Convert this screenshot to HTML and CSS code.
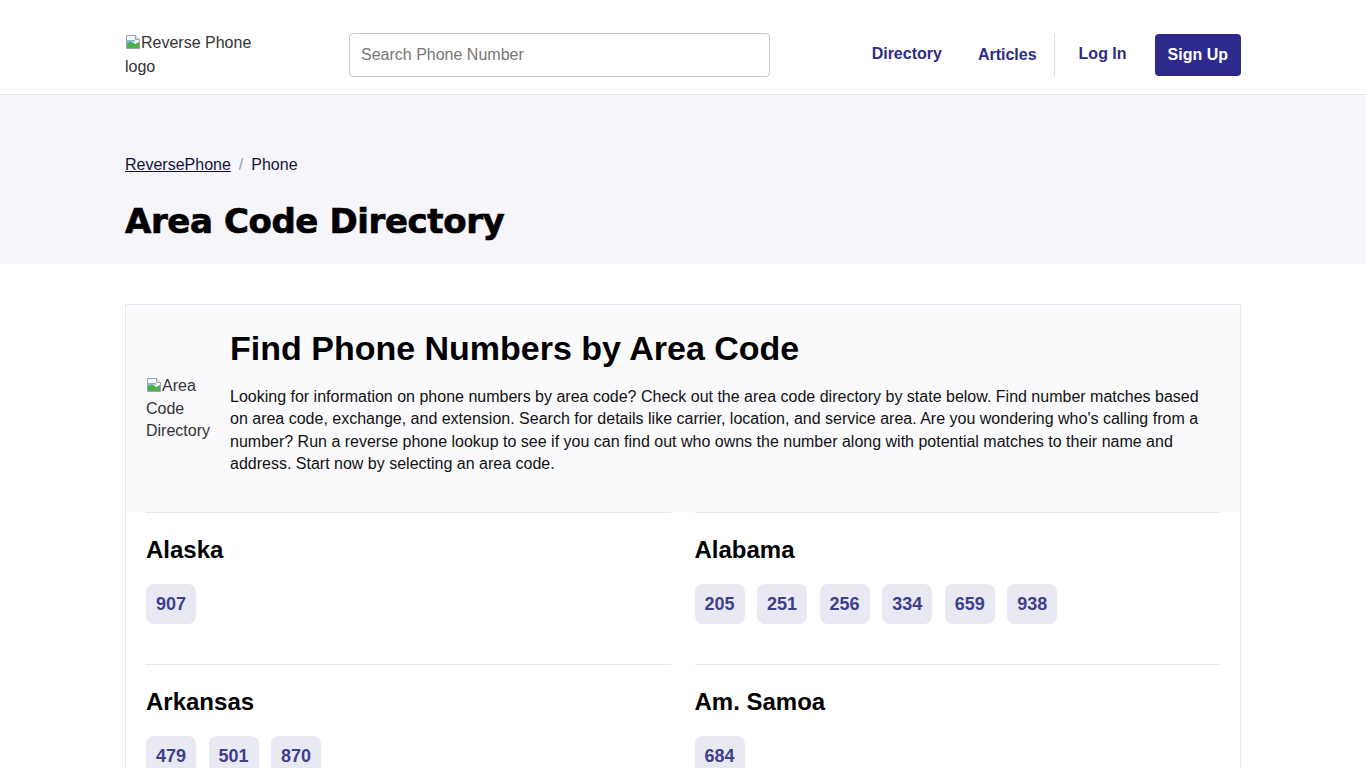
FILE: index.html
```html
<!DOCTYPE html>
<html lang="en">
<head>
<meta charset="utf-8">
<title>Area Code Directory</title>
<link rel="stylesheet" href="styles.css">
</head>
<body>
<header class="site-header">
  <div class="container header-inner">
    <div class="logo">
      <span class="alt"><svg class="broken" viewBox="0 0 16 16" width="16" height="16"><path d="M1.5 1.5h9l4 4v9h-13z" fill="#f4f6f8" stroke="#9aa3ad"/><path d="M10.5 1.5v4h4" fill="#e6e9ec" stroke="#9aa3ad"/><path d="M2 14V9l4-2 4 3 4-2v6z" fill="#4caf50"/><path d="M2 9V6h8v2l-4-1z" fill="#7fb3e6"/></svg>Reverse Phone logo</span>
    </div>
    <div class="search">
      <input type="text" placeholder="Search Phone Number">
    </div>
    <nav class="nav">
      <a class="nav-link" href="#">Directory</a>
      <a class="nav-link" href="#">Articles</a>
      <span class="divider"></span>
      <a class="nav-link login" href="#">Log In</a>
      <a class="btn" href="#">Sign Up</a>
    </nav>
  </div>
</header>

<section class="hero">
  <div class="container">
    <div class="breadcrumb"><a href="#">ReversePhone</a><span class="sep">/</span><span>Phone</span></div>
    <h1 class="title">Area Code Directory</h1>
  </div>
</section>

<main class="container">
  <div class="card">
    <div class="intro">
      <div class="intro-img"><svg class="broken" viewBox="0 0 16 16" width="16" height="16"><path d="M1.5 1.5h9l4 4v9h-13z" fill="#f4f6f8" stroke="#9aa3ad"/><path d="M10.5 1.5v4h4" fill="#e6e9ec" stroke="#9aa3ad"/><path d="M2 14V9l4-2 4 3 4-2v6z" fill="#4caf50"/><path d="M2 9V6h8v2l-4-1z" fill="#7fb3e6"/></svg>Area Code Directory</div>
      <div class="intro-text">
        <h2>Find Phone Numbers by Area Code</h2>
        <p>Looking for information on phone numbers by area code? Check out the area code directory by state below. Find number matches based on area code, exchange, and extension. Search for details like carrier, location, and service area. Are you wondering who's calling from a number? Run a reverse phone lookup to see if you can find out who owns the number along with potential matches to their name and address. Start now by selecting an area code.</p>
      </div>
    </div>
    <div class="states">
      <div class="state">
        <h3>Alaska</h3>
        <div class="chips"><a class="chip" href="#">907</a></div>
      </div>
      <div class="state">
        <h3>Alabama</h3>
        <div class="chips"><a class="chip" href="#">205</a><a class="chip" href="#">251</a><a class="chip" href="#">256</a><a class="chip" href="#">334</a><a class="chip" href="#">659</a><a class="chip" href="#">938</a></div>
      </div>
      <div class="state">
        <h3>Arkansas</h3>
        <div class="chips"><a class="chip" href="#">479</a><a class="chip" href="#">501</a><a class="chip" href="#">870</a></div>
      </div>
      <div class="state">
        <h3>Am. Samoa</h3>
        <div class="chips"><a class="chip" href="#">684</a></div>
      </div>
    </div>
  </div>
</main>
</body>
</html>
```

FILE: styles.css
```css
* { box-sizing: border-box; }
html, body { margin: 0; padding: 0; }
body {
  font-family: "Liberation Sans", Arial, sans-serif;
  font-size: 16px;
  color: #111;
  background: #fff;
}
a { text-decoration: none; color: inherit; }
.container { width: 1116px; margin: 0 auto; }

.site-header { border-bottom: 1px solid #e6e6ec; background: #fff; }
.header-inner { display: flex; align-items: center; height: 94px; padding-top: 16px; }
.logo { width: 140px; color: #333; line-height: 24px; margin-top: -1px; }
.broken { vertical-align: -2px; }
.search { margin-left: 84px; width: 421px; }
.search input {
  display: block;
  width: 100%; height: 44px; border: 1px solid #c6c6cc; border-radius: 4px;
  padding: 0 11px; font-family: "Liberation Sans", Arial, sans-serif; font-size: 16px; color: #333;
  outline: none;
}
.search input::placeholder { color: #777; }
.nav { margin-left: auto; display: flex; align-items: center; }
.nav-link { font-weight: bold; color: #2e2c86; margin: 0 18px; line-height: 24px; margin-top: -3px; }
.nav-link:first-child { margin-left: 0; }
.nav-link:nth-child(2) { margin-top: 0; margin-right: 17px; }
.divider { width: 1px; height: 42px; background: #dcdce2; }
.login { margin-left: 24px; margin-right: 28px; }
.btn {
  display: block; background: #2e2a8c; color: #fff; font-weight: bold;
  height: 42px; line-height: 42px; padding: 0 13px; border-radius: 4px; margin-top: -1px;
}

.hero { background: #f5f5fa; padding: 58px 0 23px; }
.breadcrumb { line-height: 24px; color: #14143a; }
.breadcrumb a { text-decoration: underline; }
.sep { color: #999; margin: 0 8px; }
.title {
  margin: 24px 0 0; font-family: "DejaVu Sans", sans-serif; font-weight: bold; font-size: 34px;
  line-height: 40px; color: #000; -webkit-text-stroke: 0.7px #000; letter-spacing: -0.4px;
}

.card { margin-top: 40px; border: 1px solid #e6e6ec; border-bottom: none; }
.intro { display: flex; align-items: center; gap: 20px; background: #fafafd; padding: 23px 20px 36px; }
.intro-img { width: 64px; flex: none; line-height: 22.5px; color: #333; margin-top: 14px; }
.intro-text h2 { margin: 0 0 18px; font-size: 34px; line-height: 40px; font-weight: bold; color: #000; }
.intro-text p { margin: 0; line-height: 22.4px; color: #111; }

.states { display: grid; grid-template-columns: 1fr 1fr; column-gap: 25px; padding: 0 20px; }
.state { border-top: 1px solid #e8e8ee; padding: 23px 0 40px; }
.state:nth-child(even) { margin-left: -1px; }
.state h3 { margin: 0 0 20px; font-size: 24px; line-height: 28px; font-weight: bold; color: #000; }
.chips { display: flex; gap: 12.5px; }
.chip {
  display: block; background: #e9e9f4; color: #3f3f8c; font-weight: bold; font-size: 18px;
  line-height: 24px; padding: 8px 10px; border-radius: 8px;
}
```
